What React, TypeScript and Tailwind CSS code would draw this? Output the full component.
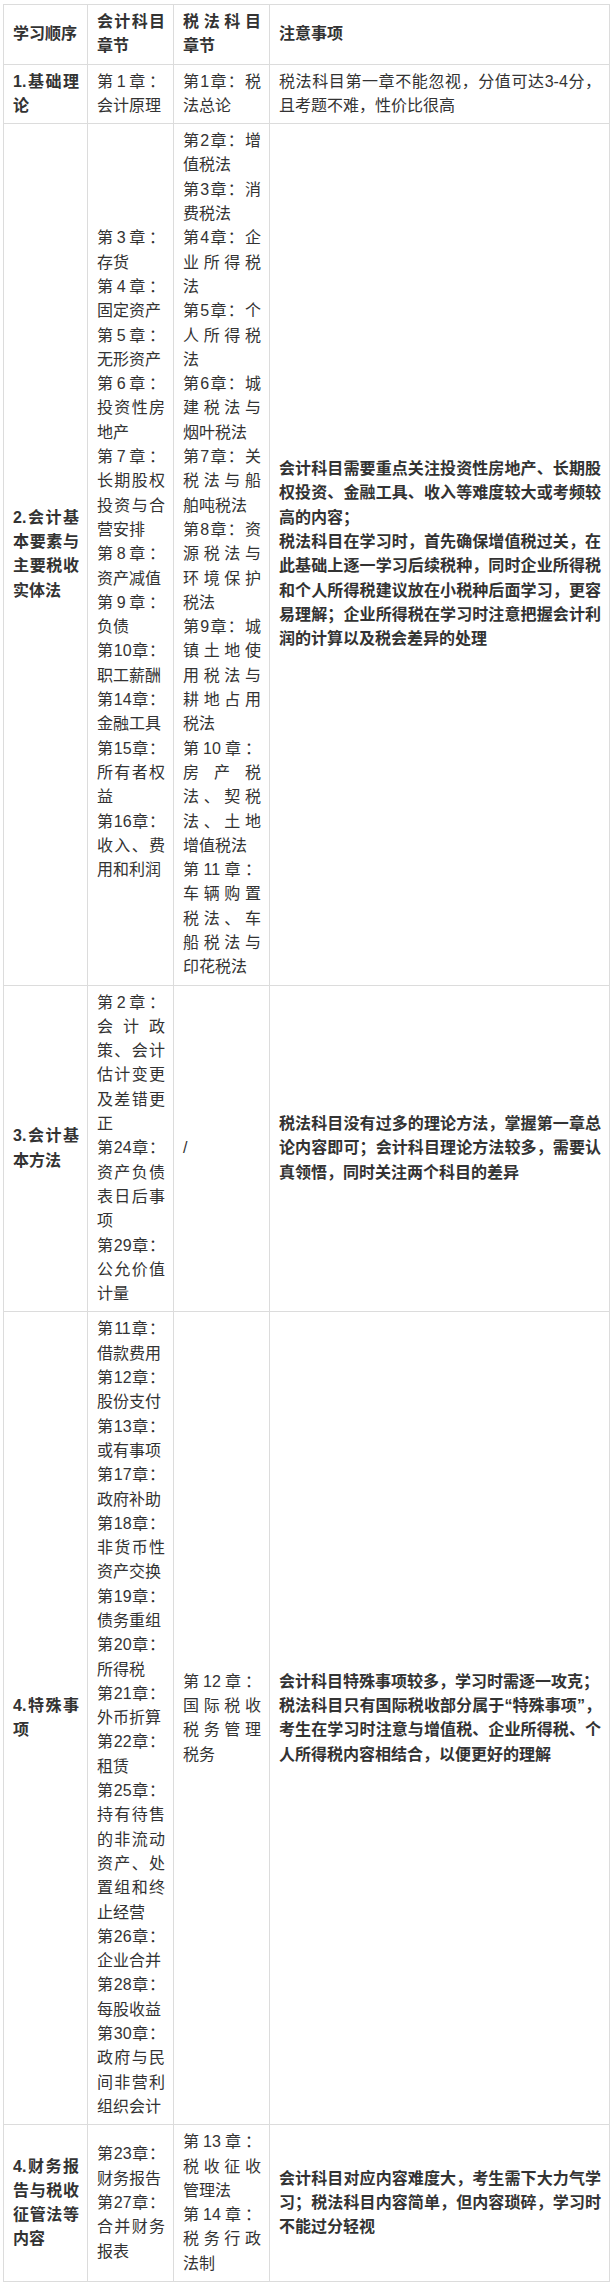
import React from "react";

type Row = {
  order: string;
  acct: string[];
  tax: string[];
  note: string[];
  noteBold?: boolean;
};

const rows: Row[] = [
  {
    order: "1.基础理论",
    acct: ["第1章：会计原理"],
    tax: ["第1章：税法总论"],
    note: ["税法科目第一章不能忽视，分值可达3-4分，且考题不难，性价比很高"],
    noteBold: false,
  },
  {
    order: "2.会计基本要素与主要税收实体法",
    acct: [
      "第3章：存货",
      "第4章：固定资产",
      "第5章：无形资产",
      "第6章：投资性房地产",
      "第7章：长期股权投资与合营安排",
      "第8章：资产减值",
      "第9章：负债",
      "第10章：职工薪酬",
      "第14章：金融工具",
      "第15章：所有者权益",
      "第16章：收入、费用和利润",
    ],
    tax: [
      "第2章：增值税法",
      "第3章：消费税法",
      "第4章：企业所得税法",
      "第5章：个人所得税法",
      "第6章：城建税法与烟叶税法",
      "第7章：关税法与船舶吨税法",
      "第8章：资源税法与环境保护税法",
      "第9章：城镇土地使用税法与耕地占用税法",
      "第10章：房产税法、契税法、土地增值税法",
      "第11章：车辆购置税法、车船税法与印花税法",
    ],
    note: [
      "会计科目需要重点关注投资性房地产、长期股权投资、金融工具、收入等难度较大或考频较高的内容；",
      "税法科目在学习时，首先确保增值税过关，在此基础上逐一学习后续税种，同时企业所得税和个人所得税建议放在小税种后面学习，更容易理解；企业所得税在学习时注意把握会计利润的计算以及税会差异的处理",
    ],
  },
  {
    order: "3.会计基本方法",
    acct: [
      "第2章：会计政策、会计估计变更及差错更正",
      "第24章：资产负债表日后事项",
      "第29章：公允价值计量",
    ],
    tax: ["/"],
    note: [
      "税法科目没有过多的理论方法，掌握第一章总论内容即可；会计科目理论方法较多，需要认真领悟，同时关注两个科目的差异",
    ],
  },
  {
    order: "4.特殊事项",
    acct: [
      "第11章：借款费用",
      "第12章：股份支付",
      "第13章：或有事项",
      "第17章：政府补助",
      "第18章：非货币性资产交换",
      "第19章：债务重组",
      "第20章：所得税",
      "第21章：外币折算",
      "第22章：租赁",
      "第25章：持有待售的非流动资产、处置组和终止经营",
      "第26章：企业合并",
      "第28章：每股收益",
      "第30章：政府与民间非营利组织会计",
    ],
    tax: ["第12章：国际税收税务管理税务"],
    note: [
      "会计科目特殊事项较多，学习时需逐一攻克；",
      "税法科目只有国际税收部分属于“特殊事项”，考生在学习时注意与增值税、企业所得税、个人所得税内容相结合，以便更好的理解",
    ],
  },
  {
    order: "4.财务报告与税收征管法等内容",
    acct: ["第23章：财务报告", "第27章：合并财务报表"],
    tax: ["第13章：税收征收管理法", "第14章：税务行政法制"],
    note: [
      "会计科目对应内容难度大，考生需下大力气学习；税法科目内容简单，但内容琐碎，学习时不能过分轻视",
    ],
  },
];

const cell =
  "border border-[#dcdcdc] pl-[9px] pr-[8px] py-[5px] align-middle text-justify";

const Lines = ({ items }: { items: string[] }) => (
  <>
    {items.map((t, i) => (
      <p key={i}>{t}</p>
    ))}
  </>
);

export default function App() {
  return (
    <div
      className="bg-white pt-[4px] pl-[3px] text-[16px] leading-[24.3px] text-[#333]"
      style={{ fontFamily: '"Liberation Sans", "Noto Sans CJK SC", sans-serif' }}
    >
      <table className="w-[606px] table-fixed border-collapse">
        <colgroup>
          <col className="w-[84px]" />
          <col className="w-[86px]" />
          <col className="w-[96px]" />
          <col className="w-[340px]" />
        </colgroup>
        <thead>
          <tr className="font-bold">
            <th className={cell}>学习顺序</th>
            <th className={cell}>会计科目章节</th>
            <th className={cell}>税法科目章节</th>
            <th className={cell}>注意事项</th>
          </tr>
        </thead>
        <tbody>
          {rows.map((r, i) => (
            <tr key={i}>
              <td className={cell + " font-bold"}>{r.order}</td>
              <td className={cell}>
                <Lines items={r.acct} />
              </td>
              <td className={cell}>
                <Lines items={r.tax} />
              </td>
              <td className={cell + (r.noteBold === false ? "" : " font-bold")}>
                <Lines items={r.note} />
              </td>
            </tr>
          ))}
        </tbody>
      </table>
    </div>
  );
}
